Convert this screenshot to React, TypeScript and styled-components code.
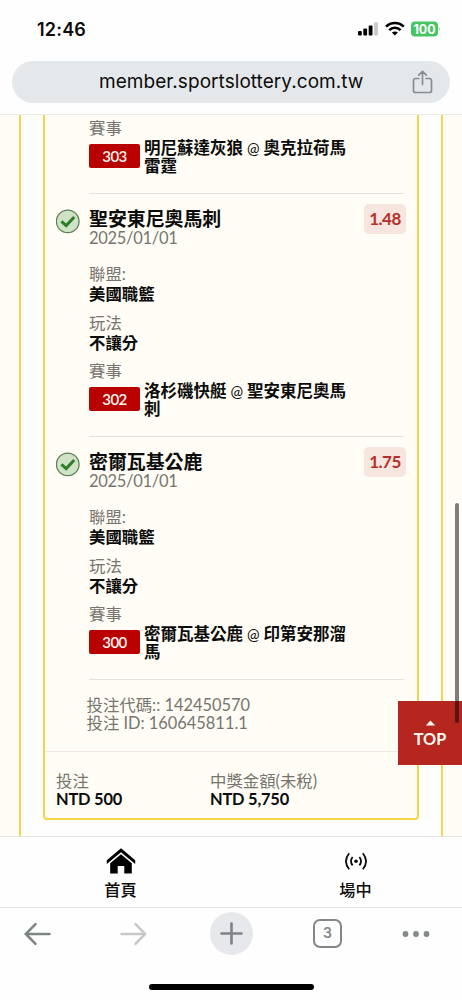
import React from "react";
import styled, { createGlobalStyle } from "styled-components";

const GlobalStyle = createGlobalStyle`
  * { box-sizing: border-box; }
  body {
    margin: 0;
    background: #fff;
    color: #0c0c0c;
    font-family: Lato, "Noto Sans CJK TC", sans-serif;
    font-size: 16.4px;
    overflow: hidden;
  }
`;

const Phone = styled.div`
  position: relative;
  width: 462px;
  height: 1000px;
  display: flex;
  flex-direction: column;
  overflow: hidden;
  background: #fefefe;
`;

const StatusBar = styled.header`
  height: 61px;
  padding: 0 22px 0 37px;
  display: flex;
  align-items: center;
  justify-content: space-between;
  flex-shrink: 0;
`;

const Clock = styled.span`
  font: 600 18px/22px Inter, sans-serif;
  letter-spacing: 0.2px;
  margin-top: -1px;
`;

const StatusIcons = styled.div`
  display: flex;
  align-items: center;
  margin-top: -1px;
`;

const AddressBar = styled.div`
  height: 42px;
  margin: 0 12px;
  padding: 0 17px 0 87px;
  border-radius: 21px;
  background: #e5e8eb;
  display: flex;
  align-items: center;
  justify-content: space-between;
  flex-shrink: 0;
`;

const Url = styled.span`
  font: 400 19px/24px Inter, sans-serif;
  letter-spacing: 0.05px;
  white-space: nowrap;
`;

const Page = styled.main`
  height: 722px;
  margin-top: 11px;
  border-top: 1px solid #ecebe6;
  background: #fffdf5;
  padding: 0 19px;
  flex-shrink: 0;
`;

const Panel = styled.section`
  height: 100%;
  border: solid #f3d84f;
  border-width: 0 2px;
  background: #fefefe;
  padding: 0 22px;
`;

const Card = styled.article`
  height: 705px;
  border: 2px solid #f6d545;
  border-top: 0;
  border-radius: 0 0 4px 4px;
  background: #fffdf5;
`;

const Leg = styled.div<{ $partial?: boolean }>`
  height: ${(p) => (p.$partial ? 79 : 243)}px;
  margin-left: 11px;
  padding-top: ${(p) => (p.$partial ? 3 : 14)}px;
  display: grid;
  grid-template-columns: 33px 1fr;
`;

const LegBody = styled.div`
  margin-right: 13px;
  border-bottom: 1px solid #e5e2dc;
`;

const Heading = styled.div`
  display: flex;
  justify-content: space-between;
  height: 38px;
  margin-right: -2px;
`;

const Team = styled.h2`
  margin: 0;
  font-size: 18.9px;
  line-height: 22px;
  font-weight: 700;
`;

const Muted = styled.div<{ $line?: number }>`
  color: #77756f;
  line-height: ${(p) => p.$line ?? 20}px;
  white-space: nowrap;
`;

const DateText = styled(Muted)`
  font-size: 16.5px;
  letter-spacing: -0.3px;
`;

const Odds = styled.span`
  width: 42px;
  height: 30px;
  margin-top: -4px;
  border-radius: 5px;
  background: #f7e5e0;
  color: #b5302a;
  font-size: 17px;
  letter-spacing: -0.5px;
  line-height: 30px;
  font-weight: 700;
  text-align: center;
`;

const Details = styled.div`
  margin-top: 18px;
  display: flex;
  flex-direction: column;
  gap: 8.5px;
`;

const Strong = styled.div`
  font-weight: 700;
  line-height: 20px;
  white-space: nowrap;
`;

const Match = styled.div`
  display: flex;
  align-items: center;
  gap: 4px;
  padding-top: 1px;
`;

const Tag = styled.span`
  width: 51px;
  height: 24px;
  margin-top: -2px;
  flex-shrink: 0;
  border-radius: 2px;
  background: #b90101;
  color: #fff6ef;
  font-size: 15px;
  letter-spacing: -0.6px;
  line-height: 24px;
  font-weight: 600;
  text-align: center;
`;

const Teams = styled.div`
  width: 210px;
  font-weight: 700;
  line-height: 18px;
  font-size: 16.5px;
  span { font-weight: 400; font-size: 15px; }
`;

const Codes = styled.div`
  height: 72px;
  padding: 16px 0 0 41.5px;
  border-bottom: 1px solid #ebe9e2;
`;

const Totals = styled.footer`
  display: grid;
  grid-template-columns: 154px 1fr;
  padding: 20px 0 0 11px;
  ${Muted} { line-height: 18px; }
  ${Strong} { line-height: 18px; letter-spacing: -0.2px; }
`;

const SiteNav = styled.nav`
  height: 72px;
  border: solid #e4e4e5;
  border-width: 1px 0;
  display: flex;
  padding: 0 0 0 3px;
  flex-shrink: 0;
`;

const NavItem = styled.a`
  width: 235px;
  flex-shrink: 0;
  padding-top: 10px;
  display: flex;
  flex-direction: column;
  align-items: center;
  font-size: 16.2px;
  font-weight: 500;
  line-height: 20px;
  svg { margin-bottom: 5px; }
`;

const BrowserBar = styled.div`
  height: 51px;
  display: grid;
  grid-template-columns: 96px 90px 102px 90px 28px;
  align-items: center;
  padding-left: 24px;
  flex-shrink: 0;
`;

const NewTab = styled.span`
  width: 43px;
  height: 43px;
  border-radius: 50%;
  background: #e7e8ec;
  display: grid;
  place-items: center;
`;

const TabCount = styled.span`
  width: 29px;
  height: 29px;
  margin-left: 1px;
  border: 2.5px solid #838788;
  border-radius: 7px;
  color: #838788;
  font: 600 14px/24px Inter, sans-serif;
  text-align: center;
`;

const HomeIndicator = styled.div`
  width: 165px;
  height: 6px;
  margin: 25px auto 0;
  border-radius: 3px;
  background: #000;
`;

const TopButton = styled.button`
  position: absolute;
  right: 0;
  top: 701px;
  width: 64px;
  height: 64px;
  padding: 0;
  border: 0;
  background: #b5261e;
  color: #fff8f0;
  font: 700 16.2px/20px Lato, sans-serif;
  display: flex;
  flex-direction: column;
  align-items: center;
  svg { margin: 19px 0 3px; }
`;

const ScrollThumb = styled.div`
  position: absolute;
  left: 455px;
  top: 503px;
  width: 4px;
  height: 220px;
  border-radius: 2px;
  background: rgba(0, 0, 0, 0.5);
`;

const WonIcon = () => (
  <svg width="25" height="26" viewBox="0 0 25 26" fill="none">
    <circle cx="11.7" cy="13.4" r="11.3" fill="#cfe3c6" stroke="#5d7f58" strokeWidth="1.3" />
    <path d="M5.4 13.3 10.2 17.6 18.2 9" stroke="#2f7d2a" strokeWidth="3" />
  </svg>
);

interface LegProps {
  team: string;
  odds: string;
  code: string;
  away: string;
  home: string;
}

const Fixture = ({ code, away, home }: Pick<LegProps, "code" | "away" | "home">) => (
  <div>
    <Muted>賽事</Muted>
    <Match>
      <Tag>{code}</Tag>
      <Teams>
        {away} <span>@</span> {home}
      </Teams>
    </Match>
  </div>
);

const BetLeg = ({ team, odds, ...fixture }: LegProps) => (
  <Leg>
    <WonIcon />
    <LegBody>
      <Heading>
        <div>
          <Team>{team}</Team>
          <DateText $line={17}>2025/01/01</DateText>
        </div>
        <Odds>{odds}</Odds>
      </Heading>
      <Details>
        <div>
          <Muted>聯盟:</Muted>
          <Strong>美國職籃</Strong>
        </div>
        <div>
          <Muted>玩法</Muted>
          <Strong>不讓分</Strong>
        </div>
        <Fixture {...fixture} />
      </Details>
    </LegBody>
  </Leg>
);

export default function App() {
  return (
    <Phone>
      <GlobalStyle />
      <StatusBar>
        <Clock>12:46</Clock>
        <StatusIcons>
          <svg width="82" height="18" viewBox="0 0 82 18">
            <rect x="0" y="10" width="3.8" height="4.5" rx="1" />
            <rect x="5.3" y="7.6" width="3.8" height="6.9" rx="1" />
            <rect x="10.7" y="4.5" width="3.8" height="10" rx="1" />
            <rect x="16.1" y="1.2" width="3.8" height="13.3" rx="1" fill="#c9c9ca" />
            <g fill="none" stroke="#000" strokeWidth="2.6">
              <path d="M28 5.7C33 .7 40.8.7 45.8 5.7" />
              <path d="M31.2 9.1C34.4 5.9 39.4 5.9 42.6 9.1" />
            </g>
            <path d="M36.9 14.6 33.9 11.5Q36.9 9.3 39.9 11.5Z" />
            <rect x="53" y="0.4" width="27" height="15" rx="4" fill="#47c565" />
            <path d="M80.8 5.6Q82.4 7.9 80.8 10.2Z" fill="#47c565" />
            <text x="66.5" y="12.5" textAnchor="middle" fill="#fff" fontFamily="Inter, sans-serif" fontWeight="700" fontSize="12.5">100</text>
          </svg>
        </StatusIcons>
      </StatusBar>
      <AddressBar>
        <Url>member.sportslottery.com.tw</Url>
        <svg width="21" height="24" viewBox="0 0 21 24" fill="none" stroke="#898d90" strokeWidth="1.7" strokeLinecap="round" strokeLinejoin="round">
          <path d="M7 8.5H3.6Q1.5 8.5 1.5 10.6V20.4Q1.5 22.5 3.6 22.5H17.4Q19.5 22.5 19.5 20.4V10.6Q19.5 8.5 17.4 8.5H14M10.5 14.5V1.6M6.7 5.1 10.5 1.3 14.3 5.1" />
        </svg>
      </AddressBar>
      <Page>
        <Panel>
          <Card>
            <Leg $partial>
              <span />
              <LegBody>
                <Fixture code="303" away="明尼蘇達灰狼" home="奧克拉荷馬雷霆" />
              </LegBody>
            </Leg>
            <BetLeg team="聖安東尼奧馬刺" odds="1.48" code="302" away="洛杉磯快艇" home="聖安東尼奧馬刺" />
            <BetLeg team="密爾瓦基公鹿" odds="1.75" code="300" away="密爾瓦基公鹿" home="印第安那溜馬" />
            <Codes>
              <Muted $line={18}>投注代碼:: 142450570</Muted>
              <Muted $line={18}>投注 ID: 160645811.1</Muted>
            </Codes>
            <Totals>
              <div>
                <Muted>投注</Muted>
                <Strong>NTD 500</Strong>
              </div>
              <div>
                <Muted>中獎金額(未稅)</Muted>
                <Strong>NTD 5,750</Strong>
              </div>
            </Totals>
          </Card>
        </Panel>
      </Page>
      <SiteNav>
        <NavItem>
          <svg width="30" height="28" viewBox="0 0 30 28">
            <path d="M.8 13.2 15 1.2 29.2 13.2V17L15 5.2.8 17Z" />
            <path d="M4.2 16.2 15 7.3 25.8 16.2V26.5H18.3V19H11.7V26.5H4.2Z" />
          </svg>
          首頁
        </NavItem>
        <NavItem>
          <svg width="24" height="28" viewBox="0 0 24 28" fill="none" stroke="#0c0c0c" strokeWidth="1.8">
            <circle cx="12" cy="14.2" r="1.8" fill="#0c0c0c" stroke="none" />
            <path d="M8.6 10Q5.4 14.2 8.6 18.4M15.4 10Q18.6 14.2 15.4 18.4M5.2 6.2Q-1.4 14.2 5.2 22.2M18.8 6.2Q25.4 14.2 18.8 22.2" />
          </svg>
          場中
        </NavItem>
      </SiteNav>
      <BrowserBar>
        <svg width="27" height="24" viewBox="0 0 27 24" fill="none" stroke="#7f8385" strokeWidth="2.5" strokeLinecap="round">
          <path d="M25.5 12H1.8M11.5 2.2 1.7 12 11.5 21.8" />
        </svg>
        <svg width="27" height="24" viewBox="0 0 27 24" fill="none" stroke="#c7c8c9" strokeWidth="2.5" strokeLinecap="round">
          <path d="M1.5 12H25.2M15.5 2.2 25.3 12 15.5 21.8" />
        </svg>
        <NewTab>
          <svg width="23" height="23" viewBox="0 0 23 23" stroke="#7f8385" strokeWidth="2.6" strokeLinecap="round">
            <path d="M11.5 1.5V21.5M1.5 11.5H21.5" />
          </svg>
        </NewTab>
        <TabCount>3</TabCount>
        <svg width="28" height="8" viewBox="0 0 28 8" fill="#85898b">
          <circle cx="3.5" cy="4" r="2.9" />
          <circle cx="14" cy="4" r="2.9" />
          <circle cx="24.5" cy="4" r="2.9" />
        </svg>
      </BrowserBar>
      <HomeIndicator />
      <TopButton>
        <svg width="11" height="6" viewBox="0 0 11 6" fill="#fff8f0">
          <path d="M.8 5.5 5.5.5 10.2 5.5Z" />
        </svg>
        TOP
      </TopButton>
      <ScrollThumb />
    </Phone>
  );
}
